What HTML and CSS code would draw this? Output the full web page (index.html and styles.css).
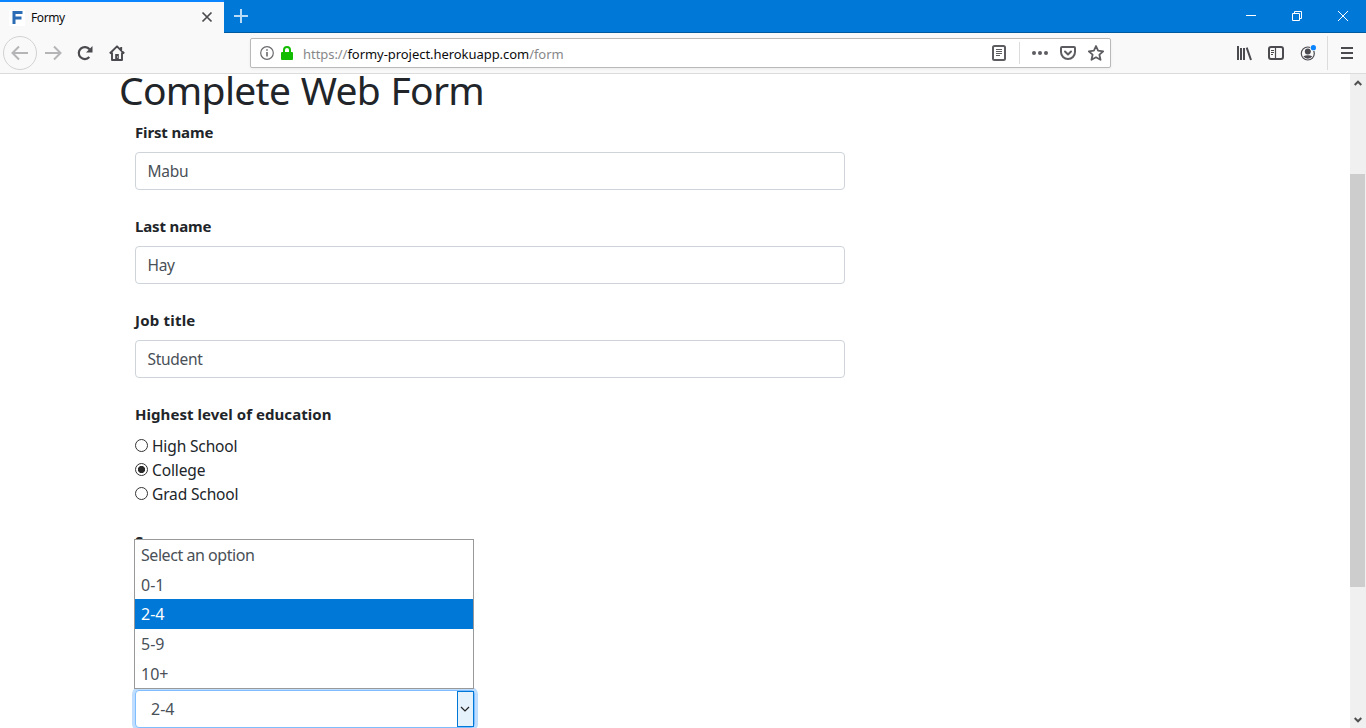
FILE: index.html
```html
<!DOCTYPE html>
<html lang="en">
<head>
<meta charset="utf-8">
<title>Formy</title>
<link rel="stylesheet" href="styles.css">
</head>
<body>
<div class="window">
  <header class="tabbar">
    <div class="tab">
      <svg class="favicon" width="16" height="16" viewBox="0 0 16 16"><rect width="16" height="16" fill="#fff"/><path d="M5 14V2.500H13.500M5 8H12.500" fill="none" stroke="#2b6cb5" stroke-width="3"/></svg>
      <span class="tab-title">Formy</span>
      <svg class="close" width="12" height="12" viewBox="0 0 12 12"><path d="M1.500 1.500l9 9M10.500 1.500l-9 9" stroke="#4a4a4f" stroke-width="1.700"/></svg>
    </div>
    <svg class="new-tab" width="16" height="16" viewBox="0 0 16 16"><path d="M8 1v14M1 8h14" stroke="#b9dbf6" stroke-width="2"/></svg>
    <div class="caption">
      <svg width="12" height="12" viewBox="0 0 12 12"><path d="M1 5.500h10" stroke="#fff"/></svg>
      <svg width="12" height="12" viewBox="0 0 12 12" fill="none" stroke="#fff"><path d="M1.500 3.500h7v7h-7zM3.500 3V1.500h7v7H9"/></svg>
      <svg width="12" height="12" viewBox="0 0 12 12"><path d="M1 1l10 10M11 1L1 11" stroke="#fff"/></svg>
    </div>
  </header>
  <nav class="toolbar">
    <div class="nav-buttons">
      <span class="back"><svg width="18" height="16" viewBox="0 0 18 16"><path d="M17 8H2M8 1.500L1.500 8L8 14.500" fill="none" stroke="#b5b5b7" stroke-width="2"/></svg></span>
      <svg width="18" height="16" viewBox="0 0 18 16"><path d="M1 8h15M10 1.500L16.500 8L10 14.500" fill="none" stroke="#b5b5b7" stroke-width="2"/></svg>
      <svg width="16" height="16" viewBox="0 0 16 16"><path d="M12.300 12A6 6 0 1 1 12.500 4.300" fill="none" stroke="#4a4a4f" stroke-width="2.200"/><path d="M15.500 1v6.500H9z" fill="#4a4a4f"/></svg>
      <svg class="home" width="16" height="16" viewBox="0 0 16 16"><path d="M.8 8.500L8 1.300l7.200 7.200M3 7.500V15h10V7.500M12.200 2v4" fill="none" stroke="#4a4a4f" stroke-width="1.900" stroke-linejoin="round"/><path d="M6.200 9h3.600v6H6.200z" fill="#4a4a4f"/><path d="M8 11.500h1v1H8z" fill="#f9f9fa"/></svg>
    </div>
    <div class="urlbar">
      <svg width="14" height="14" viewBox="0 0 14 14"><circle cx="7" cy="7" r="6.300" fill="none" stroke="#6b6b6e" stroke-width="1.200"/><path d="M7 6v4.500M7 3.300v1.500" stroke="#6b6b6e" stroke-width="1.600"/></svg>
      <svg class="lock" width="12" height="14" viewBox="0 0 12 14"><path d="M3 7V4a3 3 0 0 1 6 0v3" fill="none" stroke="#12bc00" stroke-width="2"/><rect y="6" width="12" height="8" rx="1" fill="#12bc00"/></svg>
      <span class="url">https://<b>formy-project.herokuapp.com</b>/form</span>
      <div class="page-actions">
        <svg width="14" height="16" viewBox="0 0 14 16" fill="none" stroke="#5d5d61"><rect x="1" y="1" width="12" height="14" rx="1.500" stroke-width="2"/><path d="M4 4.500h6M4 6.500h6M4 8.500h6M4 10.500h4"/></svg>
        <i class="divider"></i>
        <svg width="16" height="16" viewBox="0 0 16 16" fill="#5d5d61"><circle cx="2" cy="8" r="2"/><circle cx="8" cy="8" r="2"/><circle cx="14" cy="8" r="2"/></svg>
        <svg width="16" height="16" viewBox="0 0 16 16" fill="none" stroke="#5d5d61" stroke-width="2" stroke-linecap="round" stroke-linejoin="round"><path d="M2 2h12q1 0 1 1v4a7 7 0 0 1-14 0V3q0-1 1-1zM5 6.500l3 3 3-3"/></svg>
        <svg width="16" height="16" viewBox="0 0 16 16"><path d="M8 1l2.100 4.700 5.100.6-3.800 3.400 1.100 5.100L8 12.300l-4.500 2.500 1.100-5.100L.8 6.300l5.100-.6z" fill="none" stroke="#5d5d61" stroke-width="1.800" stroke-linejoin="round"/></svg>
      </div>
    </div>
    <div class="tools">
      <svg width="16" height="16" viewBox="0 0 16 16"><path d="M2 1v14M5 3v12M8 3v12M10.700 2.700L15 15" stroke="#4a4a4f" stroke-width="2" fill="none"/></svg>
      <svg width="16" height="16" viewBox="0 0 16 16" fill="none" stroke="#4a4a4f"><rect x="1" y="2" width="14" height="12" rx="2" stroke-width="2"/><path d="M7.500 2v12" stroke-width="1.200"/><path d="M3 5.500h3M3 7.500h3M3 9.500h2"/></svg>
      <svg width="16" height="16" viewBox="0 0 16 16"><circle cx="7.800" cy="8.500" r="6.500" fill="none" stroke="#4a4a4f" stroke-width="1.200"/><circle cx="7.800" cy="6.500" r="3" fill="#4a4a4f"/><path d="M3.300 11.300q4.500-2 9 0a5.400 5.400 0 0 1-9 0z" fill="#4a4a4f"/><circle cx="13.500" cy="2.700" r="3.400" fill="#f9f9fa"/><circle cx="13.400" cy="2.700" r="2.600" fill="#0a84ff"/></svg>
      <i class="divider tall"></i>
      <svg width="12" height="14" viewBox="0 0 12 14"><path d="M0 2h12M0 7h12M0 12h12" stroke="#4a4a4f" stroke-width="2"/></svg>
    </div>
  </nav>
  <div class="viewport">
    <main class="page">
      <h1>Complete Web Form</h1>
      <form class="form">
        <div class="group"><label class="label">First name</label><div class="input">Mabu</div></div>
        <div class="group"><label class="label">Last name</label><div class="input">Hay</div></div>
        <div class="group"><label class="label job">Job title</label><div class="input">Student</div></div>
        <div class="group">
          <label class="label edu">Highest level of education</label>
          <div class="choice"><i class="radio"></i><span>High School</span></div>
          <div class="choice"><i class="radio on"></i><span>College</span></div>
          <div class="choice"><i class="radio"></i><span>Grad School</span></div>
        </div>
        <div class="group sex"><label class="label">Sex</label></div>
        <div class="select-wrap">
          <div class="select"><span>2-4</span><i class="arrow"><svg width="10" height="6" viewBox="0 0 10 6"><path d="M1 1l4 4 4-4" fill="none" stroke="#222" stroke-width="1.200"/></svg></i></div>
          <ul class="menu">
            <li class="prompt">Select an option</li><li>0-1</li><li class="active">2-4</li><li>5-9</li><li>10+</li>
          </ul>
        </div>
      </form>
    </main>
    <aside class="scrollbar">
      <svg width="8" height="6" viewBox="0 0 8 6"><path d="M.7 5L4 1.700 7.300 5" fill="none" stroke="#505050" stroke-width="2"/></svg>
      <i class="thumb"></i>
      <svg width="8" height="6" viewBox="0 0 8 6"><path d="M.7 1L4 4.300 7.300 1" fill="none" stroke="#505050" stroke-width="2"/></svg>
    </aside>
  </div>
</div>
</body>
</html>
```
FILE: styles.css
```css
* { box-sizing: border-box; }
body { margin: 0; background: #fff; color: #212529; font: 16px/24px "Noto Sans", sans-serif; }
svg { display: block; flex: none; }
.window { width: 1366px; height: 728px; overflow: hidden; display: flex; flex-direction: column; }

.tabbar { height: 33px; flex: none; display: flex; background: #0078d7; }
.tab { width: 224px; padding: 0 11px 0 9px; display: flex; align-items: center; background: #f9f9fa; border-top: 2px solid #0a84ff; color: #0c0c0d; }
.tab-title { flex: 1; margin-left: 6px; font-size: 12px; letter-spacing: -.4px; }
.tab .close { margin-top: -1px; }
.new-tab { margin: 8px 0 0 9px; }
.caption { flex: 1; display: flex; justify-content: flex-end; gap: 34px; margin-left: -25px; padding: 10px 17px 0 25px; box-shadow: inset 0 -1px #005a9e; }

.toolbar { height: 41px; flex: none; display: flex; background: #f9f9fa; border-bottom: 1px solid #dcdcdd; }
.nav-buttons { width: 250px; padding-left: 3px; display: flex; align-items: center; }
.nav-buttons svg + svg { margin-left: 15px; }
.nav-buttons svg.home { margin-left: 16px; }
.back { width: 34px; height: 34px; margin-right: 7px; border: 1px solid #d2d2d3; border-radius: 50%; display: flex; align-items: center; justify-content: center; }
.urlbar { width: 861px; height: 30px; margin-top: 5px; padding-left: 9px; display: flex; align-items: center; background: #fff; border: 1px solid #b9b9ba; border-radius: 2px; box-shadow: 0 1px 3px rgba(0,0,0,.06); }
.lock { margin: 0 10px 0 7px; }
.url { padding-top: 2px; font-size: 13px; color: #87878a; letter-spacing: -.05px; }
.url b { font-weight: 400; color: #0c0c0d; }
.page-actions { margin-left: auto; padding-right: 6px; display: flex; align-items: center; gap: 12px; }
.divider { width: 1px; height: 22px; background: #dcdcdd; }
.page-actions .divider { margin-left: 1px; }
.tools { margin-left: auto; padding-right: 13px; display: flex; align-items: center; gap: 16px; }
.divider.tall { height: 34px; margin: 0 -3px 0 -6px; }
.tools svg:not(:last-child) { margin-left: -1px; margin-right: 1px; }

.viewport { flex: 1; min-height: 0; display: flex; justify-content: space-between; overflow: hidden; }
.page { width: 740px; margin: -8px 0 0 119px; }
h1 { height: 54px; margin: 0; font-size: 39px; line-height: 48px; font-weight: 400; letter-spacing: -.7px; word-spacing: 1px; white-space: nowrap; }
.form { padding: 0 14px 0 16px; }
.group { margin-bottom: 24px; }
.label { display: block; margin-bottom: 8px; font-weight: 700; font-size: 15px; letter-spacing: -.15px; white-space: nowrap; }
.label.job { letter-spacing: .2px; }
.label.edu { letter-spacing: .05px; }
.input { height: 38px; padding: 6px 11.500px; border: 1px solid #ced4da; border-radius: 4px; color: #495057; font-size: 15.500px; letter-spacing: -.3px; }
.choice { height: 24px; display: flex; gap: 4px; font-size: 15.500px; letter-spacing: -.13px; }
.radio { width: 13px; height: 13px; margin-top: 5px; border: 1px solid #333; border-radius: 50%; background: #fff; }
.radio.on { background: radial-gradient(circle, #2a2a2a 3.200px, #fff 4px); }
.group.sex { height: 24px; margin: -1px 0 137px; }
.select-wrap { position: relative; width: 340px; }
.select { height: 38px; padding-left: 15px; display: flex; justify-content: space-between; align-items: center; border: 1px solid #80bdff; border-radius: 4px; box-shadow: 0 0 0 3px #bfdeff; color: #495057; background: #fff; }
.arrow { width: 17px; height: 36px; padding-right: 1px; display: flex; align-items: center; justify-content: center; background: #e5f1fb; border: 1px solid #0078d7; }
.menu { position: absolute; left: -1px; bottom: 39px; width: 340px; height: 150px; margin: 0; padding: 0; list-style: none; background: #fff; border: 1px solid #999; color: #495057; display: grid; grid-template-rows: 30px 29px 30px 30px 29px; }
.menu li { padding-left: 6px; line-height: 30px; }
.menu .prompt { letter-spacing: -.45px; }
.menu .active { background: #0078d7; color: #fff; }

.scrollbar { width: 16px; padding: 6px 0 5px; display: flex; flex-direction: column; align-items: center; justify-content: space-between; background: #f0f0f0; }
.scrollbar svg { margin-right: 1px; }
.thumb { width: 16px; height: 413px; margin: 88px 0 auto; background: #cdcdcd; border-right: 1px solid #f0f0f0; }
```
